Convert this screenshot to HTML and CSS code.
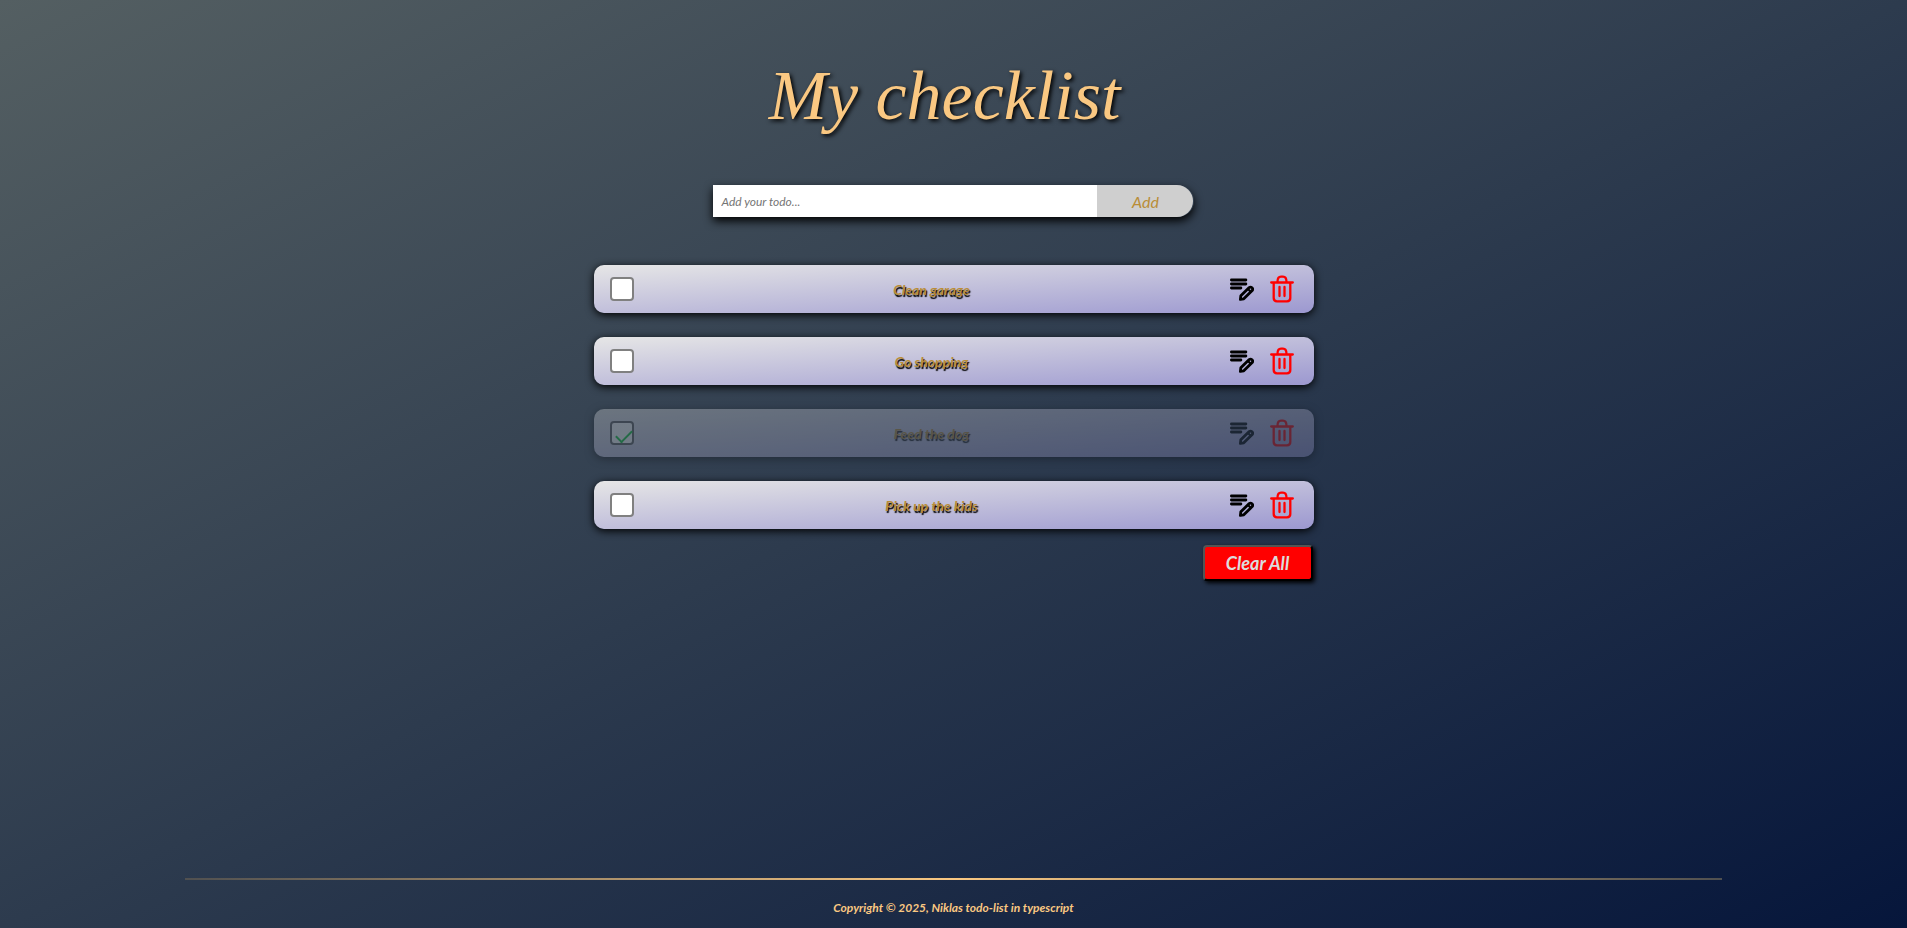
FILE: index.html
```html
<!DOCTYPE html>
<html lang="en">
<head>
<meta charset="utf-8">
<meta name="viewport" content="width=device-width, initial-scale=1">
<title>My checklist</title>
<link rel="stylesheet" href="styles.css">
</head>
<body>
<svg class="sprite" aria-hidden="true">
  <symbol id="edit" viewBox="0 0 24 24">
    <path d="M1.400 3h14.500M1.400 7h14.500M1.400 11h9.500" fill="none" stroke="currentColor" stroke-width="2.800" stroke-linecap="round"/>
    <path d="M10.400 22.400l.4-3.600 8.400-8.200q1.400-1.100 2.800.2t.2 2.800l-8.400 8.200z" fill="none" stroke="currentColor" stroke-width="2.800" stroke-linejoin="round"/>
    <path d="M17.500 11.500l3.500 3.500" fill="none" stroke="currentColor" stroke-width="2.200"/>
  </symbol>
  <symbol id="trash" viewBox="0 0 24 28">
    <path d="M1.200 7.500h21.600M7.500 7c0-3 1-5.300 3.500-5.300h2c2.500 0 3.500 2.300 3.500 5.300M3.700 8v15q0 3.300 3.300 3.300h10q3.300 0 3.300-3.300V8M9.500 12v9M14.500 12v9" fill="none" stroke="currentColor" stroke-width="2.300" stroke-linecap="round"/>
  </symbol>
</svg>
<main class="app">
  <h1 class="title">My checklist</h1>
  <form class="add-form">
    <input class="add-input" type="text" placeholder="Add your todo..." aria-label="Add your todo">
    <button class="add-button" type="button">Add</button>
  </form>
  <ul class="list">
    <li class="item">
      <input class="check" type="checkbox" id="t1">
      <label class="text" for="t1">Clean garage</label>
      <button class="icon" type="button" aria-label="Edit"><svg class="edit"><use href="#edit"/></svg></button>
      <button class="icon" type="button" aria-label="Delete"><svg class="trash"><use href="#trash"/></svg></button>
    </li>
    <li class="item">
      <input class="check" type="checkbox" id="t2">
      <label class="text" for="t2">Go shopping</label>
      <button class="icon" type="button" aria-label="Edit"><svg class="edit"><use href="#edit"/></svg></button>
      <button class="icon" type="button" aria-label="Delete"><svg class="trash"><use href="#trash"/></svg></button>
    </li>
    <li class="item done">
      <input class="check" type="checkbox" id="t3" checked>
      <label class="text" for="t3">Feed the dog</label>
      <button class="icon" type="button" aria-label="Edit"><svg class="edit"><use href="#edit"/></svg></button>
      <button class="icon" type="button" aria-label="Delete"><svg class="trash"><use href="#trash"/></svg></button>
    </li>
    <li class="item">
      <input class="check" type="checkbox" id="t4">
      <label class="text" for="t4">Pick up the kids</label>
      <button class="icon" type="button" aria-label="Edit"><svg class="edit"><use href="#edit"/></svg></button>
      <button class="icon" type="button" aria-label="Delete"><svg class="trash"><use href="#trash"/></svg></button>
    </li>
  </ul>
  <button class="clear" type="button">Clear All</button>
</main>
<footer class="footer">
  <p class="copyright">Copyright © 2025, Niklas todo-list in typescript</p>
</footer>
</body>
</html>
```
FILE: styles.css
```css
* {
  box-sizing: border-box;
  margin: 0;
  padding: 0;
}

body {
  display: flex;
  flex-direction: column;
  align-items: center;
  min-height: 100vh;
  background: linear-gradient(to bottom right, #545f62, #2d3b4e 50%, #06163b);
  font-family: Lato, "Liberation Sans", sans-serif;
  font-style: italic;
}

button,
input {
  font: inherit;
}

.sprite {
  position: absolute;
  width: 0;
  height: 0;
}

.app {
  display: flex;
  flex: 1;
  flex-direction: column;
  align-items: center;
  width: 100%;
  max-width: 720px;
  padding-top: 52px;
}

.title {
  padding-right: 18px;
  color: #fac882;
  font-family: "Liberation Serif", serif;
  font-size: 70px;
  font-weight: 400;
  line-height: 88px;
  text-shadow: 2px 2px 4px #000;
}

.add-form {
  display: flex;
  width: 66.67%;
  height: 32px;
  margin-top: 45px;
  border-radius: 0 16px 16px 0;
  box-shadow: 0 4px 10px #000;
}

.add-input {
  width: 80%;
  padding: 0 8px;
  border: 0;
  background: #fff;
  font-size: 12px;
}

.add-input::placeholder {
  color: #757575;
}

.add-button {
  width: 20%;
  border: 0;
  border-radius: 0 16px 16px 0;
  background: #cfcfcf;
  color: #b98d38;
  font-size: 16px;
}

.list {
  display: grid;
  gap: 24px;
  width: 100%;
  margin-top: 48px;
  list-style: none;
}

.item {
  display: flex;
  align-items: center;
  gap: 16px;
  height: 48px;
  padding: 0 20px 0 16px;
  border-radius: 10px;
  background: linear-gradient(to bottom right, #e6e6e6, #9c98d0);
  box-shadow: 0 2px 8px #000;
}

.done {
  opacity: 0.3;
}

.check {
  display: grid;
  place-items: center;
  width: 24px;
  height: 24px;
  border: 2px solid #808080;
  border-radius: 4px;
  background: #fff;
  appearance: none;
}

.check:checked::before {
  width: 14px;
  height: 7px;
  margin: 2px 0 0 4px;
  border: solid #00c82c;
  border-width: 0 0 2px 2px;
  content: "";
  transform: rotate(-45deg);
}

.done .check {
  border-color: #505050;
}

.text {
  flex: 1;
  color: #b98d38;
  font-size: 14px;
  font-weight: 700;
  text-align: center;
  text-shadow: 1px 2px 1px #000;
}

.icon {
  display: flex;
  border: 0;
  background: none;
}

.edit {
  width: 24px;
  height: 24px;
  color: #000;
}

.trash {
  width: 24px;
  height: 28px;
  color: #f00;
}

.clear {
  align-self: flex-end;
  min-width: 110px;
  margin: 16px 1px 0 0;
  padding: 0 16px;
  border: 2px outset #000;
  border-radius: 4px;
  background: #f00;
  box-shadow: 2px 2px 4px #000;
  color: #dcdcdc;
  font-size: 18px;
  font-weight: 700;
  line-height: 32px;
}

.footer {
  width: 80.6%;
  padding: 18px 0 10px;
  border-top: 2px solid;
  border-image: linear-gradient(to right, #505050, #fac882, #505050) 1;
}

.copyright {
  color: #fac882;
  font-size: 12px;
  font-weight: 700;
  line-height: 20px;
  text-align: center;
}
```
